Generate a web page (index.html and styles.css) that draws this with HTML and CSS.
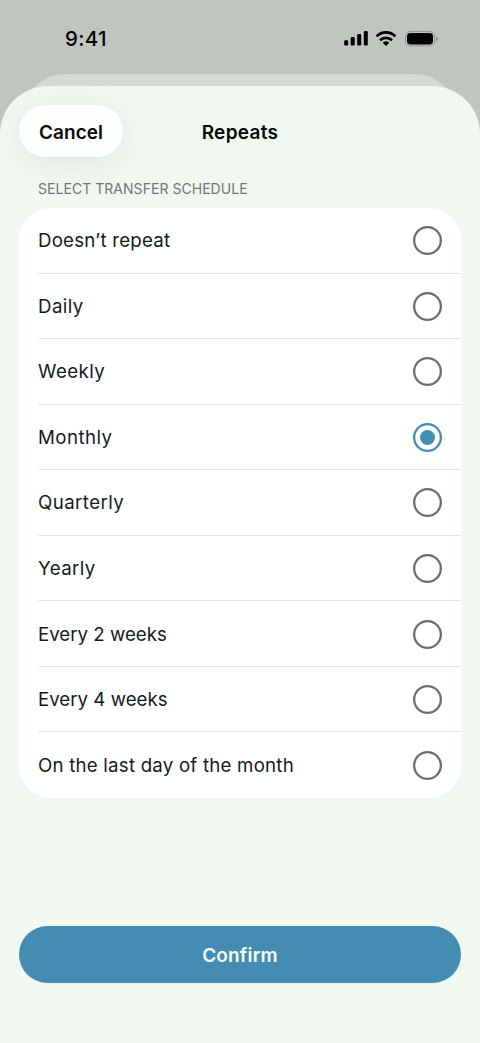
FILE: index.html
```html
<!DOCTYPE html>
<html lang="en">
<head>
<meta charset="utf-8">
<meta name="viewport" content="width=device-width, initial-scale=1">
<title>Repeats</title>
<link rel="stylesheet" href="styles.css">
</head>
<body>
<div class="screen">
  <header class="status">
    <span class="time">9:41</span>
    <svg class="status-icons" width="96" height="20" viewBox="0 0 96 20" aria-hidden="true">
      <rect x="1.2" y="11.2" width="4" height="5.2" rx="1.2"/>
      <rect x="7.7" y="8" width="4" height="8.4" rx="1.2"/>
      <rect x="14.2" y="5" width="4" height="11.4" rx="1.2"/>
      <rect x="20.8" y="2" width="4" height="14.4" rx="1.2"/>
      <g fill="none" stroke="#000" stroke-width="2.6">
        <path d="M33.6 7.3a13.3 13.3 0 0 1 18.8 0"/>
        <path d="M37 11.3a8.6 8.6 0 0 1 12 0"/>
      </g>
      <path d="M39.8 13.8a4.8 4.8 0 0 1 6.4 0L43 17.1z"/>
      <rect x="62.5" y="2.5" width="29" height="14.4" rx="4.6" fill="none" stroke="#929994"/>
      <rect x="64" y="4" width="26" height="11.4" rx="3.4"/>
      <path d="M93 7.7c2.2.7 2.2 3.5 0 4.2z" fill="#858b87"/>
    </svg>
  </header>
  <div class="back-sheet"></div>
  <main class="sheet">
    <div class="nav">
      <button class="cancel">Cancel</button>
      <h1 class="title">Repeats</h1>
    </div>
    <h2 class="caption">SELECT TRANSFER SCHEDULE</h2>
    <ul class="options">
      <li class="option"><span class="label medium">Doesn’t repeat</span><i class="radio"></i></li>
      <li class="option"><span class="label wide">Daily</span><i class="radio"></i></li>
      <li class="option"><span class="label wide">Weekly</span><i class="radio"></i></li>
      <li class="option"><span class="label wide">Monthly</span><i class="radio selected"></i></li>
      <li class="option"><span class="label wide">Quarterly</span><i class="radio"></i></li>
      <li class="option"><span class="label wide">Yearly</span><i class="radio"></i></li>
      <li class="option"><span class="label">Every 2 weeks</span><i class="radio"></i></li>
      <li class="option"><span class="label">Every 4 weeks</span><i class="radio"></i></li>
      <li class="option"><span class="label medium">On the last day of the month</span><i class="radio"></i></li>
    </ul>
    <button class="confirm">Confirm</button>
  </main>
</div>
</body>
</html>
```
FILE: styles.css
```css
* { box-sizing: border-box; }
body { margin: 0; font-family: Inter, "Noto Sans", sans-serif; color: #161a1c; }
.screen { width: 480px; height: 1043px; display: flex; flex-direction: column; background: #c0c5c0; overflow: hidden; }
.status { height: 74px; flex: none; display: flex; justify-content: space-between; align-items: flex-start; padding: 24px 41px 0 65px; color: #000; }
.time { font: 550 20.5px/30px Inter, sans-serif; letter-spacing: .3px; }
.status-icons { margin-top: 5px; }
.back-sheet { height: 50px; flex: none; margin: 0 23px -38px; background: #d5dad5; border-radius: 42px 42px 0 0; }
.sheet { position: relative; flex: 1; display: flex; flex-direction: column; padding: 19px 19px 60px; background: #f1f8f2; border-radius: 48px 48px 0 0; }
.nav { display: grid; grid-template-columns: 104px 1fr 104px; align-items: center; height: 53px; flex: none; }
button { border: 0; padding: 0; font-family: Inter, sans-serif; }
.cancel { height: 52px; margin-bottom: 1px; padding-top: 2px; border-radius: 26px; background: #fcfffd; color: #0b0d0c; font-size: 19px; font-weight: 600; box-shadow: 0 6px 36px rgba(0,0,0,.08); }
.title { margin: 2px 0 0; text-align: center; color: #050706; font: 600 19px/30px Inter, sans-serif; letter-spacing: .3px; }
.caption { margin: 20px 0 0 19px; height: 30px; flex: none; font-weight: 400; font-size: 14px; line-height: 22px; letter-spacing: .04px; color: #717774; }
.options { flex: none; height: 590px; margin: 0 0 128px; padding: 0; list-style: none; display: grid; grid-template-rows: repeat(9, 1fr); background: #fefffe; border-radius: 32px; }
.option { margin-left: 19px; padding-right: 19px; padding-top: 1px; display: flex; align-items: center; justify-content: space-between; border-bottom: 1px solid #e3e5e4; }
.option:last-child { border: 0; }
.label { padding-top: 1px; font-size: 18.7px; line-height: 28px; white-space: nowrap; }
.medium { letter-spacing: .21px; }
.wide { letter-spacing: .42px; }
.radio { width: 29px; height: 29px; box-shadow: inset 0 0 0 2.3px #6d6f6e; border-radius: 50%; display: grid; place-items: center; }
.selected { box-shadow: inset 0 0 0 2.3px #448cb1; }
.selected::after { content: ""; width: 15px; height: 15px; border-radius: 50%; background: #448cb1; }
.confirm { flex: none; height: 57px; padding-top: 1px; border-radius: 29px; background: #458cb2; color: #f5fffd; font-size: 19px; font-weight: 600; letter-spacing: .15px; }
```
